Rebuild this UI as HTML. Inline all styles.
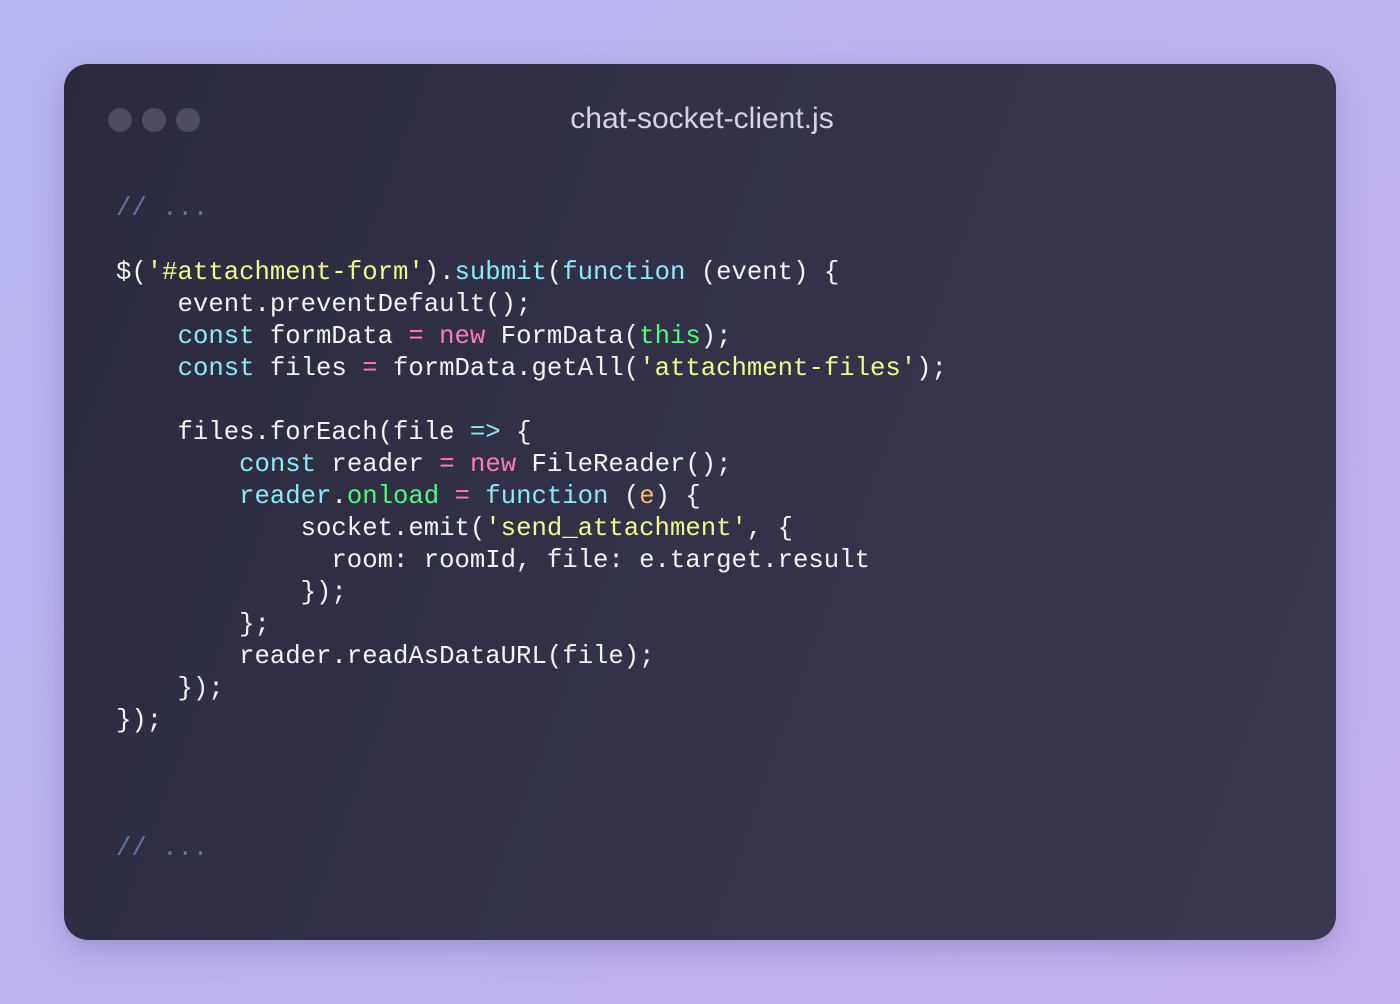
<!DOCTYPE html>
<html><head><style>
html,body{margin:0;padding:0;}
body{width:1400px;height:1004px;background:linear-gradient(135deg,#b7b6f0 0%,#c4b2ee 100%);position:relative;overflow:hidden;font-family:"Liberation Sans",sans-serif;}
.card{position:absolute;left:64px;top:64px;width:1272px;height:876px;border-radius:24px;background:linear-gradient(110deg,#2b2a3d 0%,#333249 50%,#3b3851 100%);box-shadow:0 10px 30px rgba(60,40,120,.25);}
.dot{position:absolute;top:108px;width:24px;height:24px;border-radius:50%;background:#4e4c5f;}
.title{position:absolute;left:0;width:1404px;top:101px;text-align:center;font-size:30px;color:#d4d3de;line-height:36px;}
pre{position:absolute;left:116px;top:193px;margin:0;font-family:"Liberation Mono","DejaVu Sans Mono",monospace;font-size:25.65px;line-height:32px;color:#f4f4f2;}
.c{color:#6272a4}.y{color:#f1fa8c}.b{color:#8be9fd}.p{color:#ff79c6}.g{color:#50fa7b}.o{color:#ffb86c}
</style></head><body>
<div class="card"></div>
<div class="dot" style="left:108px"></div>
<div class="dot" style="left:142px"></div>
<div class="dot" style="left:176px"></div>
<div class="title">chat-socket-client.js</div>
<pre><span class="c">// ...</span>

$(<span class="y">'#attachment-form'</span>).<span class="b">submit</span>(<span class="b">function</span> (event) {
    event.preventDefault();
    <span class="b">const</span> formData <span class="p">=</span> <span class="p">new</span> FormData(<span class="g">this</span>);
    <span class="b">const</span> files <span class="p">=</span> formData.getAll(<span class="y">'attachment-files'</span>);

    files.forEach(file <span class="b">=&gt;</span> {
        <span class="b">const</span> reader <span class="p">=</span> <span class="p">new</span> FileReader();
        <span class="b">reader</span>.<span class="g">onload</span> <span class="p">=</span> <span class="b">function</span> (<span class="o">e</span>) {
            socket.emit(<span class="y">'send_attachment'</span>, {
              room: roomId, file: e.target.result
            });
        };
        reader.readAsDataURL(file);
    });
});



<span class="c">// ...</span></pre>
</body></html>
